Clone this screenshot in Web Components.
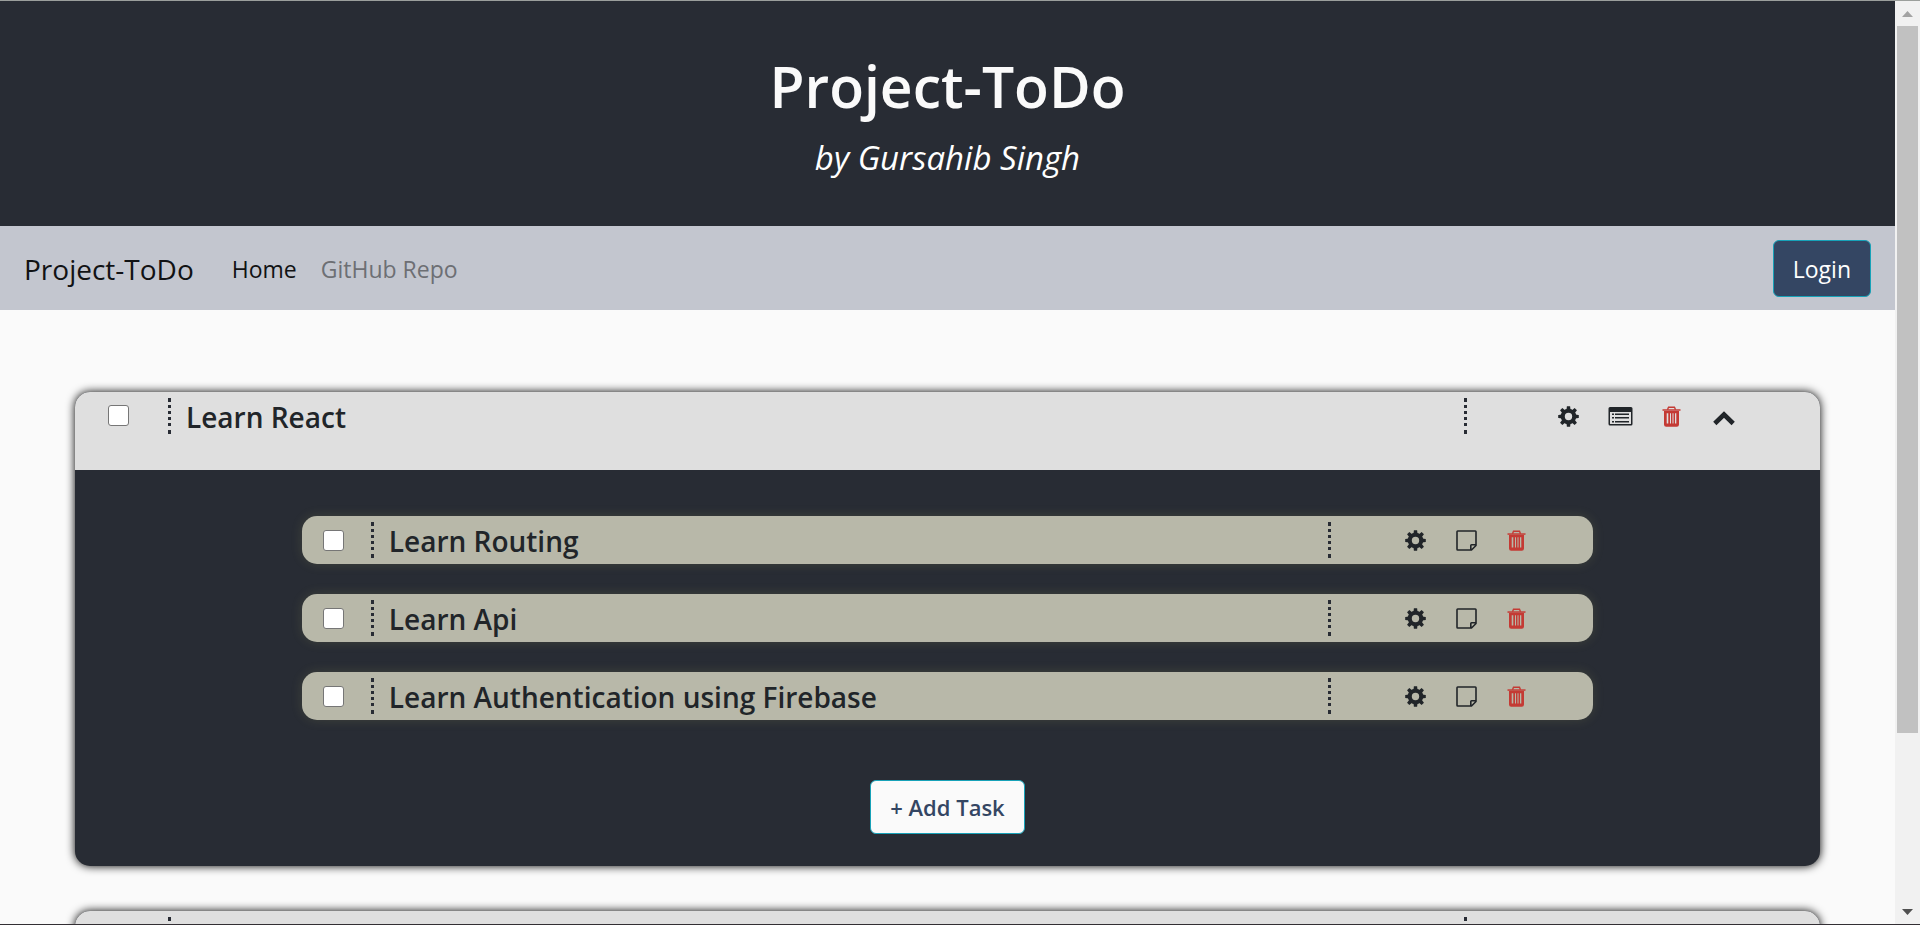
<!DOCTYPE html>
<html lang="en">
<head>
<meta charset="utf-8">
<title>Project-ToDo</title>
<style>
html, body { height: 100%; margin: 0; }
body { font-family: "Open Sans", "Noto Sans", sans-serif; color: #212529; background: #fafafa; }
</style>
</head>
<body>
<todo-app></todo-app>
<script>
const define = (name, html, setup) => {
  const template = document.createElement('template');
  template.innerHTML = html;
  customElements.define(name, class extends HTMLElement {
    constructor() {
      super();
      this.attachShadow({ mode: 'open' }).append(template.content.cloneNode(true));
    }
    connectedCallback() { if (setup) setup(this, this.shadowRoot); }
  });
};

const teeth = [0, 45, 90, 135, 180, 225, 270, 315]
  .map(a => `<path transform="rotate(${a} 10.5 10.5)" d="M8.4 4.4 L8.9 0.2 H12.1 L12.6 4.4 Z"/>`).join('');
const icons = {
  gear: [21, 21, `${teeth}<path fill-rule="evenodd" d="M10.5 2.7a7.8 7.8 0 1 0 0 15.6a7.8 7.8 0 0 0 0-15.6zM10.5 6.8a3.7 3.7 0 1 1 0 7.4a3.7 3.7 0 0 1 0-7.4z"/>`],
  list: [25, 21, `<path fill-rule="evenodd" d="M2 1H23Q24.500 1 24.500 2.500V18Q24.500 19.500 23 19.500H2Q.5 19.500 .5 18V2.500Q.5 1 2 1zM2 6V17.500Q2 18 2.500 18H22.500Q23 18 23 17.500V6z"/><path d="M4 7.500h2v1.500H4zM7 7.500h14v1.500H7zM4 11h2v1.500H4zM7 11h14v1.500H7zM4 15h2v1.500H4zM7 15h14v1.500H7z"/>`],
  trash: [19, 21, `<path fill="none" stroke="currentColor" stroke-width="1.400" d="M5.500 3.700L6.500 1.200H12.500L13.500 3.700"/><path d="M.5 3.300h18v1.500H.5z"/><path fill-rule="evenodd" d="M2 5H17V18.500Q17 20.700 14.800 20.700H4.200Q2 20.700 2 18.500zM4.700 7.200V17.500H6.300V7.200zM8 7.200V17.500H9V7.200zM10.500 7.200V17.500H11.500V7.200zM13 7.200V17.500H14.300V7.200z"/>`],
  note: [21, 21, `<path fill="none" stroke="currentColor" stroke-width="1.600" stroke-linejoin="round" d="M1.700 1H19.300Q20 1 20 1.700V15.500L15.500 20H1.700Q1 20 1 19.300V1.700Q1 1 1.700 1zM20 14.800H15.500Q14.800 14.800 14.800 15.500V20"/>`],
  chevron: [28, 21, `<path fill="none" stroke="currentColor" stroke-width="4.600" d="M4.800 17.500L14 8.500L23.200 17.500"/>`]
};

define('todo-icon', `
<style>
:host { display: block; line-height: 0; }
:host([name=trash]) { color: #c43a34; }
</style><svg fill="currentColor" aria-hidden="true"></svg>`, (host, root) => {
  const [w, h, body] = icons[host.getAttribute('name')];
  const svg = root.querySelector('svg');
  svg.setAttribute('width', w);
  svg.setAttribute('height', h);
  svg.setAttribute('viewBox', `0 0 ${w} ${h}`);
  svg.innerHTML = body;
});

define('page-banner', `
<style>
:host { display: block; background: #282c34; color: #fafafa; text-align: center; padding: 44px 16px; }
h1 { margin: 0; font-size: 57px; line-height: 82px; font-weight: 600; }
p { margin: 6px 0 0; font-size: 33px; line-height: 49px; font-style: italic; color: #fff; }
</style>
<h1><slot name="title"></slot></h1>
<p><slot></slot></p>`);

define('nav-bar', `
<style>
:host { display: flex; align-items: center; background: #c3c6cf; padding: 14px 24px 13px; }
a { color: #111214; text-decoration: none; font-size: 23px; line-height: 36px; }
.brand { font-size: 28px; margin-right: 38px; }
nav { display: flex; gap: 24px; flex: 1; }
.muted { color: #6d6f74; }
button { font: 23px/36px "Open Sans", "Noto Sans", sans-serif; color: #fff; background: #344663; border: 1px solid #17a2b8; border-radius: 6px; height: 57px; padding: 0 19px; }
</style>
<a class="brand" href="#">Project-ToDo</a>
<nav><a href="#">Home</a><a class="muted" href="#">GitHub Repo</a></nav>
<button type="button">Login</button>`);

const rowStyle = `
.row { display: grid; }
.lead { display: flex; }
input { appearance: none; flex: none; box-sizing: border-box; width: 21px; height: 21px; margin: 0; background: #fff; border: 1px solid #767676; border-radius: 3px; }
label { display: block; height: 36px; padding: 0 18px; font-size: 28px; line-height: 38px; font-weight: 600; color: #212529;
  --dots: linear-gradient(#282c34 4px, #0000 4px 7px, #282c34 7px 10px, #0000 10px 13px, #282c34 13px 16px, #0000 16px 19px, #282c34 19px 22px, #0000 22px 25px, #282c34 25px 28px, #0000 28px 32px, #282c34 32px);
  background: var(--dots) left / 3px 36px no-repeat, var(--dots) right / 3px 36px no-repeat; white-space: nowrap; }
.tools { display: flex; align-items: center; }
button { all: unset; display: block; cursor: pointer; }`;

define('task-row', `
<style>
:host { display: block; background: #b8b8a9; border-radius: 15px; box-shadow: 0 0 12px rgba(184, 184, 100, .16); padding: 6px 0; }
${rowStyle}
.row { grid-template-columns: 69fr 961fr 262fr; }
.lead { padding: 8px 0 0 21px; }
.tools { gap: 30px; padding-left: 74px; }
</style>
<div class="row">
  <div class="lead"><input type="checkbox" id="done"></div>
  <label for="done"><slot></slot></label>
  <div class="tools">
    <button type="button" aria-label="Edit"><todo-icon name="gear"></todo-icon></button>
    <button type="button" aria-label="Note"><todo-icon name="note"></todo-icon></button>
    <button type="button" aria-label="Delete"><todo-icon name="trash"></todo-icon></button>
  </div>
</div>`);

define('project-card', `
<style>
:host { display: block; border-radius: 15px; box-shadow: 0 0 10px #000; overflow: hidden; background: #282c34; }
:host([collapsed]) .body { display: none; }
${rowStyle}
.row { grid-template-columns: 93fr 1299fr 353fr; background: #dfdfdf; padding: 6px 0 36px; }
.lead { padding: 7px 0 0 33px; }
.tools { gap: 29px; padding-left: 91px; }
.body { padding: 46px 13% 32px; display: grid; gap: 30px; }
.add { box-sizing: border-box; justify-self: center; margin-top: 30px; height: 54px; padding: 0 19px; border: 1px solid #17a2b8; border-radius: 6px; background: #fafafa; color: #344663; font-size: 22px; font-weight: 600; line-height: 52px; }
</style>
<div class="row">
  <div class="lead"><input type="checkbox" id="done"></div>
  <label for="done"><slot name="title"></slot></label>
  <div class="tools">
    <button type="button" aria-label="Edit"><todo-icon name="gear"></todo-icon></button>
    <button type="button" aria-label="Details"><todo-icon name="list"></todo-icon></button>
    <button type="button" aria-label="Delete"><todo-icon name="trash"></todo-icon></button>
    <button type="button" aria-label="Collapse"><todo-icon name="chevron"></todo-icon></button>
  </div>
</div>
<div class="body"><slot></slot><button class="add" type="button">+ Add Task</button></div>`);

define('scroll-rail', `
<style>
:host { display: flex; flex-direction: column; width: 25px; background: #f1f1f1; }
span { flex: none; height: 25px; display: grid; place-items: center; }
.track { flex: 1; padding: 0 2px; }
.thumb { height: 81%; background: #c1c1c1; }
</style>
<span><svg width="11" height="6" fill="#a3a3a3"><path d="M0 6L5.500 0L11 6z"/></svg></span>
<div class="track"><div class="thumb"></div></div>
<span><svg width="11" height="6" fill="#505050"><path d="M0 0H11L5.500 6z"/></svg></span>`);

define('todo-app', `
<style>
:host { display: flex; height: 100vh; box-sizing: border-box; border-top: 1px solid #9b9f9c; border-bottom: 1px solid #332f34; }
.view { flex: 1; min-width: 0; overflow: auto; scrollbar-width: none; background: #fafafa; }
main { padding: 82px 75px; display: grid; gap: 45px; }
</style>
<div class="view">
  <page-banner><span slot="title">Project-ToDo</span>by Gursahib Singh</page-banner>
  <nav-bar></nav-bar>
  <main>
    <project-card>
      <span slot="title">Learn React</span>
      <task-row>Learn Routing</task-row>
      <task-row>Learn Api</task-row>
      <task-row>Learn Authentication using Firebase</task-row>
    </project-card>
    <project-card collapsed></project-card>
  </main>
</div>
<scroll-rail></scroll-rail>`);
</script>
</body>
</html>
